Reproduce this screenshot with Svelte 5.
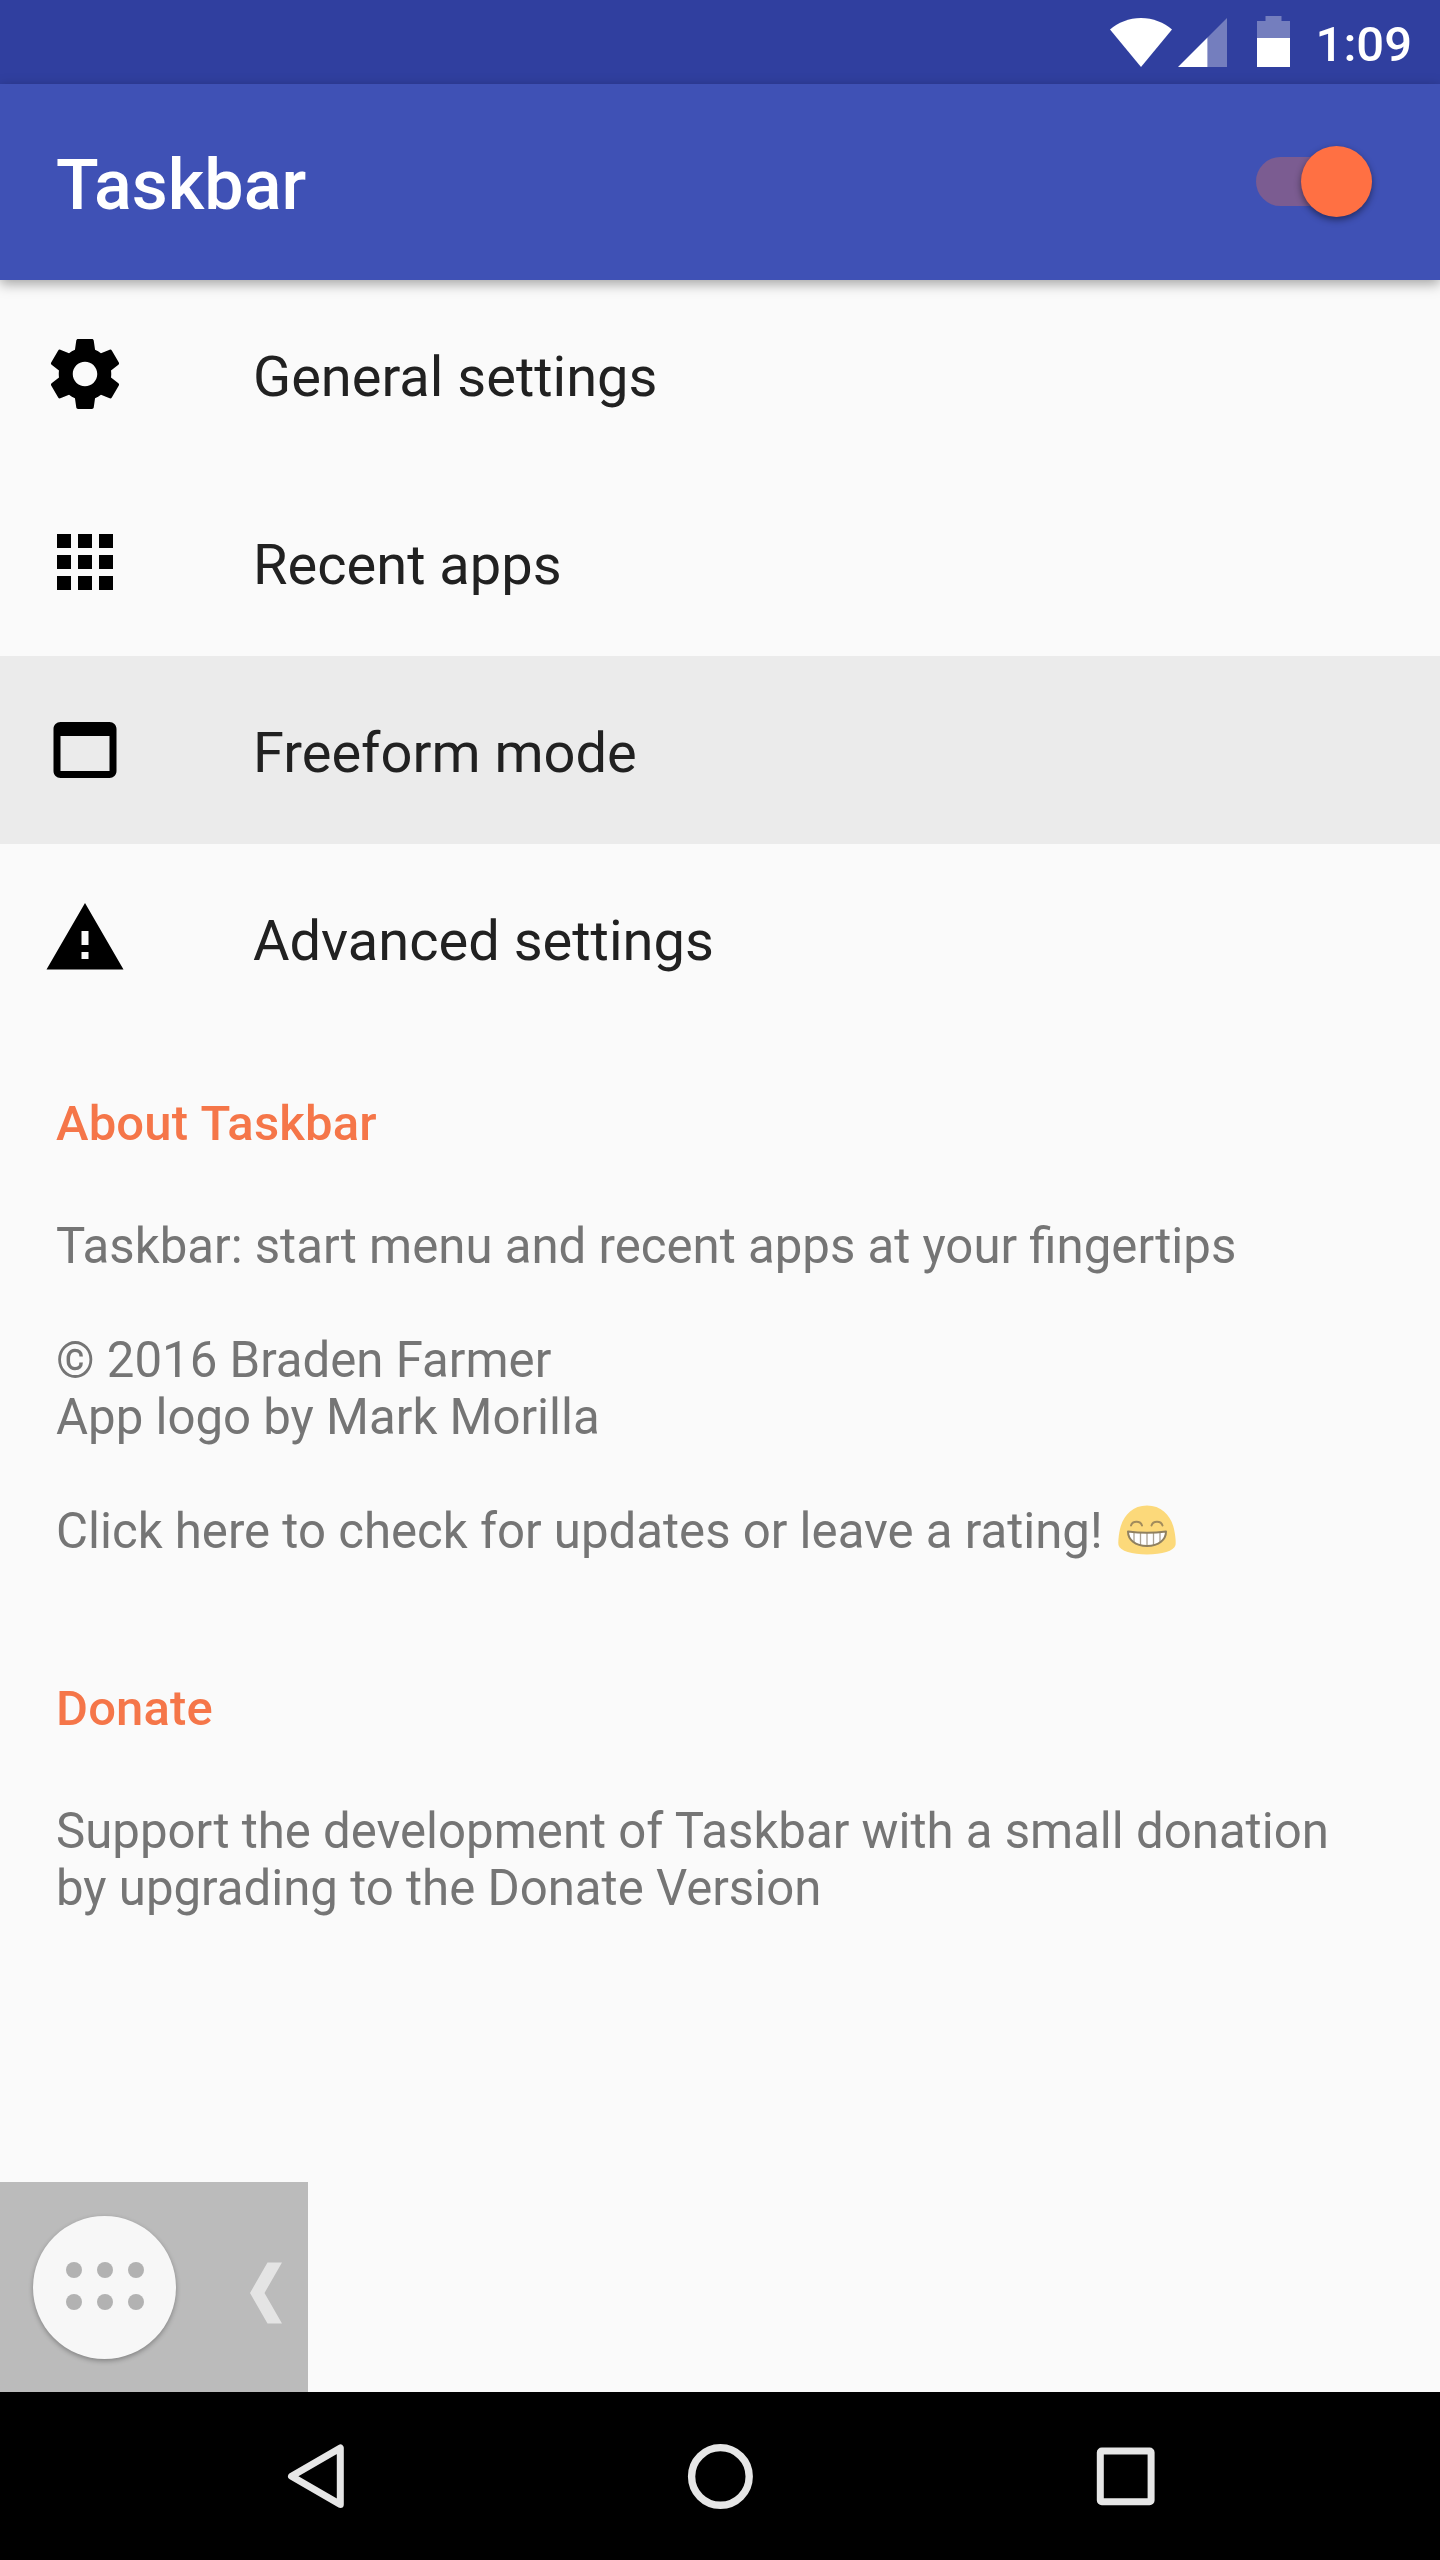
<script>
  let enabled = $state(true);

  const items = [
    { icon: 'settings', label: 'General settings' },
    { icon: 'apps', label: 'Recent apps' },
    { icon: 'window', label: 'Freeform mode', pressed: true },
    { icon: 'warning', label: 'Advanced settings' }
  ];

  const paths = {
    settings:
      'M19.43 12.98c.04-.32.07-.64.07-.98s-.03-.66-.07-.98l2.11-1.65c.19-.15.24-.42.12-.64l-2-3.46c-.12-.22-.39-.3-.61-.22l-2.49 1c-.52-.4-1.08-.73-1.69-.98l-.38-2.65C14.46 2.18 14.25 2 14 2h-4c-.25 0-.46.18-.49.42l-.38 2.65c-.61.25-1.17.59-1.69.98l-2.49-1c-.23-.09-.49 0-.61.22l-2 3.46c-.13.22-.07.49.12.64l2.11 1.65c-.04.32-.07.65-.07.98s.03.66.07.98l-2.11 1.65c-.19.15-.24.42-.12.64l2 3.46c.12.22.39.3.61.22l2.49-1c.52.4 1.08.73 1.69.98l.38 2.65c.03.24.24.42.49.42h4c.25 0 .46-.18.49-.42l.38-2.65c.61-.25 1.17-.59 1.69-.98l2.49 1c.23.09.49 0 .61-.22l2-3.46c.12-.22.07-.49-.12-.64l-2.11-1.65zM12 15.5c-1.93 0-3.5-1.57-3.5-3.5s1.57-3.5 3.5-3.5 3.5 1.57 3.5 3.5-1.57 3.5-3.5 3.5z',
    apps: 'M4 8h4V4H4v4zm6 12h4v-4h-4v4zm-6 0h4v-4H4v4zm0-6h4v-4H4v4zm6 0h4v-4h-4v4zm6-10v4h4V4h-4zm-6 4h4V4h-4v4zm6 6h4v-4h-4v4zm0 6h4v-4h-4v4z',
    window:
      'M19 4H5c-1.11 0-2 .9-2 2v12c0 1.1.89 2 2 2h14c1.1 0 2-.9 2-2V6c0-1.1-.89-2-2-2zm0 14H5V8h14v10z',
    warning: 'M1 21h22L12 2 1 21zm12-3h-2v-2h2v2zm0-4h-2v-4h2v4z'
  };
</script>

<div class="screen">
  <header class="status">
    <svg class="wifi" viewBox="0 0 62 49"><path d="M31 49 0 11.5C8 4.500 19 0 31 0s23 4.500 31 11.500z" fill="#fff" /></svg>
    <svg class="cell" viewBox="0 0 49 49">
      <path d="M49 0v49H29.500V19.500z" fill="#fff" fill-opacity=".33" />
      <path d="M0 49 29.500 19.500V49z" fill="#fff" />
    </svg>
    <svg class="battery" viewBox="0 0 33 51">
      <path d="M8.500 0h16v5H33v17H0V5h8.500z" fill="#fff" fill-opacity=".33" />
      <path d="M0 22h33v29H0z" fill="#fff" />
    </svg>
    <span class="clock">1:09</span>
  </header>

  <div class="toolbar">
    <h1>Taskbar</h1>
    <button class="switch" class:on={enabled} aria-label="Enable Taskbar" onclick={() => (enabled = !enabled)}>
      <span class="thumb"></span>
    </button>
  </div>

  <main>
    <nav class="list">
      {#each items as item}
        <div class="row" class:pressed={item.pressed}>
          <svg viewBox="0 0 24 24"><path d={paths[item.icon]} /></svg>
          <span>{item.label}</span>
        </div>
      {/each}
    </nav>

    <section class="about">
      <h2>About Taskbar</h2>
      <p>Taskbar: start menu and recent apps at your fingertips</p>
      <p>© 2016 Braden Farmer<br />App logo by Mark Morilla</p>
      <p class="rate">
        <span>Click here to check for updates or leave a rating!</span>
        <svg viewBox="0 0 58 50">
          <path d="M29 .5C14 .5 5 11 2 24 .5 31 0 37 .5 40 2 46 14 49.500 29 49.500S56 46 57.500 40C58 37 57.500 31 56 24 53 11 44 .5 29 .5z" fill="#fcd97a" />
          <path d="M13 20.500c1.500-5 9.500-5 11 0M33.500 20.500c1.500-5 9.500-5 11 0" fill="none" stroke="#a28c5c" stroke-width="2" stroke-linecap="round" />
          <path d="M10 26.500c12 1.500 26 1.500 38 0 0 8-7 14.500-19 14.500S10 34.500 10 26.500z" fill="#fff" />
          <path d="M16 28v9M22.500 28v12M29 28v12M35.500 28v12M42 28v9" fill="none" stroke="#aaa294" stroke-width="1.300" />
          <path d="M10 26.500c12 1.500 26 1.500 38 0 0 8-7 14.500-19 14.500S10 34.500 10 26.500z" fill="none" stroke="#8f8060" stroke-width="2" stroke-linejoin="round" />
        </svg>
      </p>
    </section>

    <section class="donate">
      <h2>Donate</h2>
      <p>Support the development of Taskbar with a small donation<br />by upgrading to the Donate Version</p>
    </section>

    <div class="dock">
      <div class="launcher">
        {#each Array(6) as _}<i></i>{/each}
      </div>
      <svg viewBox="0 0 32 62"><path d="M17.500.5H32L14.500 31 32 61.500H17.500L0 31z" fill="#e4e4e4" /></svg>
    </div>
  </main>

  <footer>
    <svg viewBox="0 0 84 84"><path d="M68.300 14v56.500L19.500 42.200z" fill="none" stroke="#e6e6e6" stroke-width="7" stroke-linejoin="round" /></svg>
    <svg viewBox="0 0 84 84"><circle cx="42.400" cy="42.400" r="28.800" fill="none" stroke="#e6e6e6" stroke-width="7.400" /></svg>
    <svg viewBox="0 0 84 84"><rect x="16.300" y="17" width="50.800" height="50.800" rx="1.500" fill="none" stroke="#e6e6e6" stroke-width="7" /></svg>
  </footer>
</div>

<style>
  .screen {
    width: 1440px;
    height: 2560px;
    display: flex;
    flex-direction: column;
    overflow: hidden;
    background: #fafafa;
    font-family: Roboto, sans-serif;
    font-size: 49px;
    line-height: 57px;
  }
  svg {
    display: block;
    flex: none;
  }
  h1, h2, p {
    margin: 0;
  }
  .status {
    height: 84px;
    box-sizing: border-box;
    padding: 0 28px 0 0;
    background: #303f9f;
    display: flex;
    justify-content: flex-end;
    align-items: center;
    color: #fff;
  }
  .wifi {
    width: 62px;
    height: 49px;
    margin-right: 6px;
  }
  .cell {
    width: 49px;
    height: 49px;
    margin-right: 30px;
  }
  .battery {
    width: 33px;
    height: 51px;
    margin-right: 26px;
    margin-bottom: 1px;
  }
  .clock {
    font-weight: 500;
    padding-top: 4px;
  }
  .toolbar {
    height: 196px;
    flex: none;
    box-sizing: border-box;
    padding: 0 68px 0 56px;
    display: flex;
    align-items: center;
    justify-content: space-between;
    background: #3f51b5;
    box-shadow: 0 4px 12px rgba(0, 0, 0, 0.35);
    z-index: 1;
  }
  h1 {
    font-size: 70px;
    line-height: 82px;
    font-weight: 500;
    color: #fff;
    padding-top: 6px;
  }
  .switch {
    width: 116px;
    height: 49px;
    margin-bottom: 1px;
    padding: 0;
    border: 0;
    border-radius: 25px;
    background: rgba(255, 255, 255, 0.3);
    display: flex;
    align-items: center;
  }
  .switch.on {
    background: #7b5c91;
    justify-content: flex-end;
  }
  .thumb {
    width: 71px;
    height: 71px;
    flex: none;
    border-radius: 50%;
    background: #ff7043;
    box-shadow: 0 3px 7px rgba(0, 0, 0, 0.45);
  }
  main {
    flex: 1;
    display: flex;
    flex-direction: column;
    align-items: stretch;
  }
  .row {
    height: 188px;
    display: flex;
    align-items: center;
    gap: 126px;
    padding-left: 43px;
    font-size: 56px;
    line-height: 66px;
    color: #212121;
  }
  .row.pressed {
    background: #ebebeb;
  }
  .row svg {
    width: 84px;
    height: 84px;
    fill: #000;
  }
  .row span {
    padding-top: 5px;
  }
  section {
    padding: 63px 56px 0;
    color: #757575;
  }
  h2 {
    font-size: 49px;
    line-height: 57px;
    font-weight: 500;
    letter-spacing: 0.15px;
    word-spacing: 1.2px;
    color: #f57649;
    margin-bottom: 66px;
  }
  p {
    font-size: 49.16px;
  }
  p + p {
    margin-top: 57px;
  }
  .donate {
    padding-top: 120px;
  }
  .rate {
    display: flex;
    align-items: center;
    gap: 15px;
  }
  .rate svg {
    width: 58px;
    height: 50px;
    margin-bottom: 3px;
  }
  .dock {
    width: 308px;
    height: 210px;
    margin-top: auto;
    box-sizing: border-box;
    padding: 0 26px 0 33px;
    display: flex;
    align-items: center;
    justify-content: space-between;
    background: #bbb;
  }
  .dock svg {
    width: 32px;
    height: 62px;
    margin-top: 12px;
  }
  .launcher {
    width: 143px;
    height: 143px;
    box-sizing: border-box;
    padding: 0 0 2px;
    border-radius: 50%;
    background: #f7f7f7;
    box-shadow: 0 2px 5px rgba(0, 0, 0, 0.3);
    display: grid;
    grid-template-columns: repeat(3, 16px);
    gap: 16px 15px;
    place-content: center;
  }
  .launcher i {
    width: 16px;
    height: 16px;
    border-radius: 50%;
    background: #b2b2b2;
  }
  footer {
    height: 168px;
    flex: none;
    background: #000;
    display: flex;
    align-items: center;
    justify-content: center;
    gap: 322px;
  }
  footer svg {
    width: 84px;
    height: 84px;
  }
</style>
